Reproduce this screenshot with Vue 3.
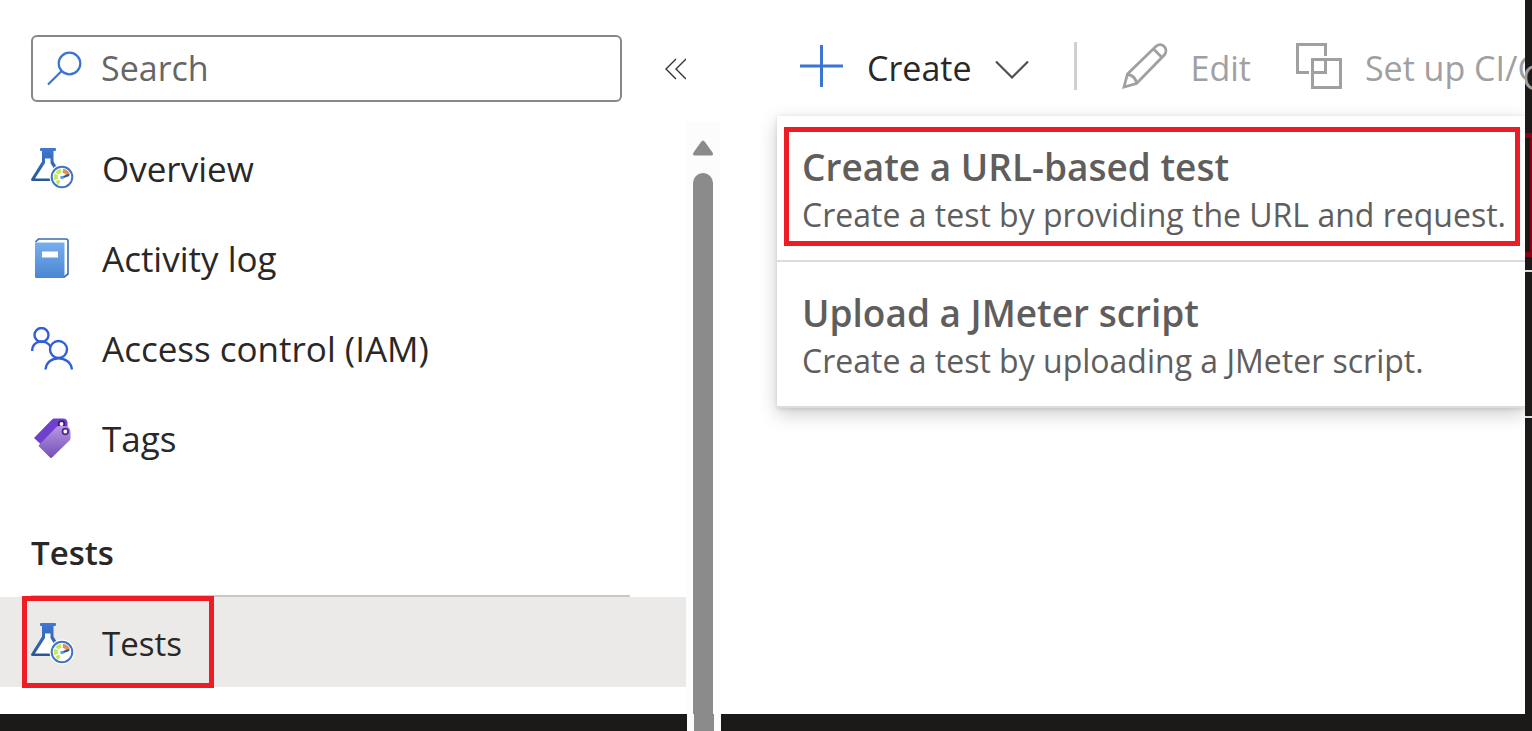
<script setup>
import { ref } from 'vue'

const query = ref('')
const items = [
  { label: 'Overview', icon: 'flask' },
  { label: 'Activity log', icon: 'book' },
  { label: 'Access control (IAM)', icon: 'people' },
  { label: 'Tags', icon: 'tags' },
]
const options = [
  { title: 'Create a URL-based test', text: 'Create a test by providing the URL and request.', marked: true },
  { title: 'Upload a JMeter script', text: 'Create a test by uploading a JMeter script.', marked: false },
]
</script>

<template>
  <div class="page">
    <svg class="defs" aria-hidden="true">
      <defs>
        <linearGradient id="g-flask" x1="0" y1="0" x2="0" y2="1">
          <stop offset="0" stop-color="#3f78d4" />
          <stop offset="1" stop-color="#2a5695" />
        </linearGradient>
        <linearGradient id="g-book" x1="0" y1="0" x2="0" y2="1">
          <stop offset="0" stop-color="#77aeed" />
          <stop offset="1" stop-color="#4a86d2" />
        </linearGradient>
        <linearGradient id="g-tag" x1="0" y1="0" x2="0" y2="1">
          <stop offset="0" stop-color="#b796e3" />
          <stop offset="1" stop-color="#7550b4" />
        </linearGradient>
        <symbol id="i-flask" viewBox="0 0 44 44">
          <path d="M10 1h14q1 0 1 1v1q0 1-1 1h-1.500v10.500L34 34H2q-3 0-1.500-2.500L11 14.500V4h-1q-1 0-1-1V2q0-1 1-1z" fill="url(#g-flask)" />
          <path d="M14 11.500h5.500v4.500L29 31.500H4L14 16z" fill="#fff" />
          <circle cx="31" cy="30" r="12.500" fill="#fff" />
          <circle cx="31" cy="30" r="10.300" fill="#fff" stroke="#3f73c6" stroke-width="2" />
          <g fill="none" stroke-width="4">
            <path d="M25.300 32.500A6.300 6.300 0 0 1 25.300 27.300" stroke="#c3ea58" />
            <path d="M26 26.300A6.300 6.300 0 0 1 30 23.700" stroke="#c3ea58" />
            <path d="M26 33.600A6.300 6.300 0 0 0 28.500 36" stroke="#c3ea58" />
            <path d="M31.800 23.700A6.300 6.300 0 0 1 37.200 28.500" stroke="#e3914a" />
          </g>
          <path d="M31 30.500L38 28" stroke="#2a5695" stroke-width="2" />
          <circle cx="31" cy="30.500" r="1.800" fill="#5ea0ef" />
        </symbol>
        <symbol id="i-book" viewBox="0 0 44 44">
          <path d="M4.500 5L7.500 2h27.500q2 0 2 2V37l-4.500 3.500" fill="#fff" stroke="#3f69ae" stroke-width="1.600" />
          <path d="M4 5.500h29.500v35.500H5q-1 0-1-1z" fill="url(#g-book)" />
          <path d="M11 14.500h16v6H11z" fill="#fff" />
        </symbol>
        <symbol id="i-people" viewBox="0 0 44 44">
          <g fill="none" stroke="#315fd5" stroke-width="2.400">
            <circle cx="10.500" cy="8" r="7" />
            <path d="M1.200 24C1.200 12 17 12 19.800 20.500" />
            <circle cx="27.500" cy="22.500" r="8.500" />
            <path d="M14.500 42.500C16 27.500 39 27.500 41 42.500" />
          </g>
        </symbol>
        <symbol id="i-tags" viewBox="-1 1 44 44">
          <path d="M2 22L20 3.500q1-1 2.500-1H31q4 0 4.500 4V12L9 28.500z" fill="#6f3fce" />
          <circle cx="29.500" cy="8" r="2.800" fill="#fff" stroke="#3d1b77" stroke-width="1.800" />
          <path d="M7 29L24.500 11q1-1 2.500-1h5.500q6 0 6 6v6q0 1.500-1 2.500L20 41.500q-1 1-2 0L7 30.500q-1-.7 0-1.500z" fill="url(#g-tag)" />
          <circle cx="33.300" cy="15.500" r="2.800" fill="#fff" stroke="#4e2796" stroke-width="1.800" />
        </symbol>
      </defs>
    </svg>

    <aside class="side">
      <div class="searchrow">
        <label class="search">
          <svg width="36" height="36" viewBox="0 0 36 36" fill="none" stroke="#3b74d1" stroke-width="2.200" aria-hidden="true">
            <circle cx="23.500" cy="12.500" r="10.800" />
            <path d="M15.700 20L2 33.500" />
          </svg>
          <input v-model="query" type="text" placeholder="Search" aria-label="Search" />
        </label>
        <button class="collapse" type="button" aria-label="Collapse menu">
          <svg width="22" height="22" viewBox="0 0 22 22" fill="none" stroke="#333" stroke-width="1.400">
            <path d="M11 1L1 11l10 10M21 1L11 11l10 10" />
          </svg>
        </button>
      </div>
      <nav>
        <a v-for="item in items" :key="item.label" class="item" href="#">
          <svg class="icon" aria-hidden="true"><use :href="'#i-' + item.icon" /></svg>
          <span>{{ item.label }}</span>
        </a>
        <h2>Tests</h2>
        <a class="item active" href="#" aria-current="page">
          <svg class="icon" aria-hidden="true"><use href="#i-flask" /></svg>
          <span>Tests</span>
          <i class="mark"></i>
        </a>
      </nav>
    </aside>

    <div class="scroll">
      <svg width="20" height="16" viewBox="0 0 20 16" aria-hidden="true">
        <path d="M8 2q2-3 4 0l7.500 10.500q1.500 3-1.500 3H2q-3 0-1.500-3z" fill="#8a8a8a" />
      </svg>
      <div class="thumb"></div>
    </div>

    <main>
      <div class="toolbar">
        <button class="tool create" type="button">
          <svg width="44" height="44" viewBox="0 0 44 44" aria-hidden="true">
            <path d="M21.500 1v42M0 22h43" stroke="#3b74d1" stroke-width="3" />
          </svg>
          <span>Create</span>
          <svg class="chevron" width="34" height="20" viewBox="0 0 34 20" fill="none" stroke="#505050" stroke-width="2.200" aria-hidden="true">
            <path d="M1 1.500L17 17.500 33 1.500" />
          </svg>
        </button>
        <span class="rule"></span>
        <button class="tool" type="button" disabled>
          <svg width="46" height="46" viewBox="0 0 46 46" fill="none" stroke="#a0a0a0" stroke-width="2.800" aria-hidden="true">
            <path d="M2 44L5.500 31 34 3.300c6-5 13 2.500 8.500 8.500L14.500 40.500zM31.500 6l8.500 8.500M5.500 31.500q8 1 9 9" />
          </svg>
          <span>Edit</span>
        </button>
        <button class="tool setup" type="button" disabled>
          <svg width="46" height="46" viewBox="0 0 46 46" fill="none" stroke="#a0a0a0" stroke-width="3" aria-hidden="true">
            <path d="M13 29.500H1.500v-28h28V13M16.500 16.500h28v28h-28zM16.500 29.500h13v-13" />
          </svg>
          <span>Set up CI/CD</span>
        </button>
      </div>
      <div class="menu" role="menu">
        <button v-for="o in options" :key="o.title" class="option" type="button" role="menuitem">
          <strong>{{ o.title }}</strong>
          <span>{{ o.text }}</span>
          <i v-if="o.marked" class="mark"></i>
        </button>
      </div>
    </main>

    <div class="edge" aria-hidden="true">
      <div class="letter">C</div>
      <div class="redbox"></div>
      <div class="line first"></div>
      <div class="line second"></div>
    </div>
    <div class="foot left"></div>
    <div class="foot track"></div>
    <div class="foot right"></div>
  </div>
</template>

<style>
body { margin: 0; background: #fff; }
</style>

<style scoped>
* { box-sizing: border-box; }
.page {
  display: grid;
  grid-template-columns: 686px 35px minmax(0, 1fr) 7px;
  grid-template-rows: minmax(0, 1fr) 17px;
  height: 100vh;
  overflow: hidden;
  background: #fff;
  color: #292827;
  font-family: "Open Sans", "Noto Sans", sans-serif;
  font-size: 35px;
  line-height: 48px;
}
.defs { position: absolute; width: 0; height: 0; }
button { margin: 0; padding: 0; border: 0; background: none; font: inherit; color: inherit; text-align: left; }
.side { min-width: 0; overflow: hidden; }
.searchrow { display: flex; align-items: center; gap: 43px; padding: 35px 0 0 31px; }
.search {
  display: flex; align-items: center; gap: 19px;
  width: 591px; height: 67px; padding-left: 13px; flex: none;
  border: 2px solid #8a8886; border-radius: 6px;
}
.search input {
  flex: 1; min-width: 0; padding: 0 0 2px; border: 0; outline: 0; background: none;
  font: inherit; font-size: 34px; color: #292827;
}
.search input::placeholder { color: #666; opacity: 1; }
.collapse { display: flex; }
nav { padding-top: 22px; }
.item {
  position: relative; display: flex; align-items: center; gap: 27px;
  height: 90px; padding-left: 31px; color: inherit; text-decoration: none;
}
.icon { width: 44px; height: 44px; flex: none; }
h2 {
  margin: 0 56px 0 31px; padding: 45px 0 18px;
  border-bottom: 2px solid #c8c8c8;
  font-size: 33px; line-height: 48px; font-weight: 600;
}
.active { padding-top: 4px; background: #ebeae8; }
.active span { font-size: 33px; }
.mark { position: absolute; border: 5px solid #ee1c25; pointer-events: none; }
.item .mark { left: 22px; top: -1px; width: 192px; height: 92px; }
.scroll {
  display: flex; flex-direction: column; align-items: center; gap: 17px;
  margin: 122px 1px 0 0; padding-top: 18px; background: #fcfcfc;
}
.scroll svg { flex: none; }
.thumb { flex: 1; width: 20px; border-radius: 10px 10px 0 0; background: #8b8b8b; }
main { position: relative; overflow: hidden; }
.toolbar { display: flex; align-items: center; height: 132px; padding-left: 79px; white-space: nowrap; font-size: 34px; }
.tool { display: flex; align-items: center; flex: none; }
.tool svg { flex: none; }
.tool span { padding-top: 4px; }
.tool .chevron { margin-top: 8px; }
.tool:disabled { color: #a0a0a0; }
.tool { gap: 23px; }
.rule { width: 3px; height: 48px; margin: 0 45px; flex: none; background: #d2d0ce; }
.setup { margin-left: 45px; }
.menu {
  position: absolute; left: 56px; right: 0; top: 116px;
  background: #fff; box-shadow: 0 6px 18px rgba(0, 0, 0, .2), 0 1px 4px rgba(0, 0, 0, .12);
}
.option {
  position: relative; display: block; width: 100%; padding: 27px 0 21px 25px;
  border-bottom: 2px solid #dcdcdc; color: #605e5c; white-space: nowrap;
}
.option strong { display: block; font-size: 37px; font-weight: 600; }
.option span { display: block; font-size: 32px; }
.option .mark { left: 7px; right: 5px; top: 11px; height: 119px; }
.edge { overflow: hidden; background: #1b1a18; }
.letter { height: 48px; margin: 53px 0 32px -3px; color: #a0a0a0; }
.redbox { width: 7px; height: 124px; border: solid #8c0016; border-width: 5px 2px 5px 0; }
.line { height: 2px; background: #dcdcdc; }
.first { margin-top: 13px; }
.second { margin-top: 144px; }
.foot { background: #1b1a18; }
.left { margin-right: -1px; }
.track { margin-left: 1px; background: linear-gradient(to right, #fcfcfc 7px, #8b8b8b 7px, #8b8b8b 27px, #fcfcfc 27px); }
.right { grid-column: span 2; }
</style>
